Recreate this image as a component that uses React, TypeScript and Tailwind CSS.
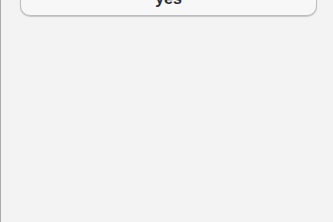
export default function App() {
  return (
    <div className="w-[333px] h-[222px] overflow-hidden bg-[#f3f3f3] border-l border-[#aaaaaa]" style={{ fontFamily: '"Liberation Sans", Arial, sans-serif' }}>
      <div className="mt-[-20px] ml-[19px] mr-[16px] h-[36px] rounded-[10px] border border-[#bdbdbd] bg-[#f7f7f7] shadow-[0_1px_1px_rgba(0,0,0,0.18)] flex items-end justify-center pb-[8px]">
        <span className="text-[16px] leading-[16px] font-bold text-[#2b2b33]">yes</span>
      </div>
    </div>
  );
}
